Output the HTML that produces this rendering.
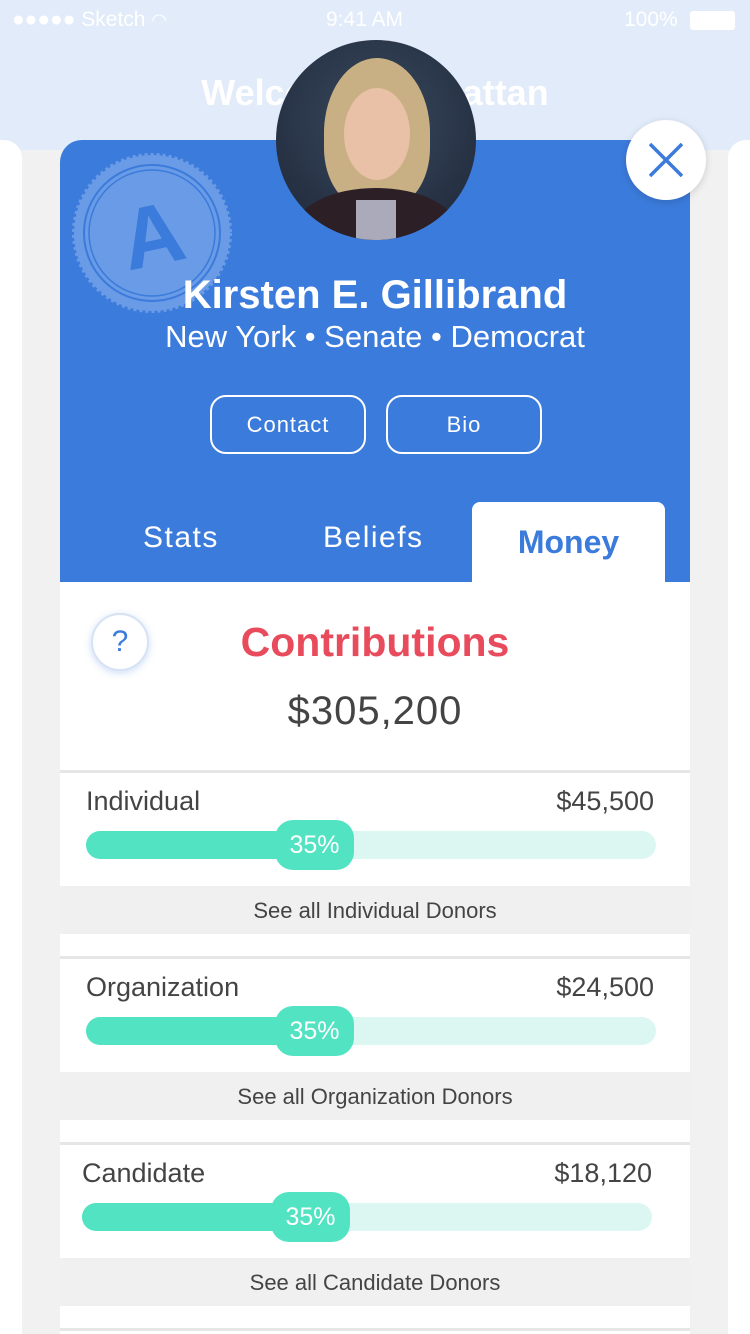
<!DOCTYPE html>
<html style="width:750px;height:1334px;overflow:hidden"><head><meta charset="utf-8"><style>
*{margin:0;padding:0;box-sizing:border-box}
body{width:750px;height:1334px;overflow:hidden;position:relative;background:#f1f1f1;font-family:"Liberation Sans",sans-serif}
.top{position:absolute;left:0;top:0;width:750px;height:150px;background:#e2ebf9}
.side{position:absolute;top:140px;width:22px;height:1194px;background:#fff}
.status{position:absolute;top:8px;color:#fff;font-size:21px}
.welcome{position:absolute;top:72px;width:750px;text-align:center;color:#fff;font-weight:bold;font-size:36px}
.card{position:absolute;left:60px;top:140px;width:630px;height:1194px;background:#fff;border-radius:22px 22px 0 0;overflow:hidden}
.blue{position:absolute;left:0;top:0;width:630px;height:442px;background:#3b7bdb}
.name{position:absolute;top:133px;width:630px;text-align:center;color:#fff;font-weight:bold;font-size:40px}
.sub{position:absolute;top:179px;width:630px;text-align:center;color:#fff;font-size:31px}
.btn{position:absolute;top:255px;width:156px;height:59px;border:2px solid #fff;border-radius:16px;color:#fff;font-size:22px;text-align:center;line-height:55px;letter-spacing:1px}
.tab{position:absolute;top:381px;color:#fff;font-size:30px;letter-spacing:1.5px}
.money{position:absolute;left:412px;top:362px;width:193px;height:82px;background:#fff;border-radius:8px 8px 0 0;color:#3b7bdb;font-weight:bold;font-size:32px;text-align:center;line-height:80px}
.q{position:absolute;left:31px;top:473px;width:58px;height:58px;border-radius:50%;border:2px solid #d7e2f5;box-shadow:0 2px 8px rgba(59,123,219,.25);color:#3b7bdb;font-size:30px;text-align:center;line-height:54px;background:#fff}
.contrib{position:absolute;top:479px;width:630px;text-align:center;color:#e84c5c;font-weight:bold;font-size:41px}
.total{position:absolute;top:549px;width:630px;text-align:center;color:#444;font-size:40px;letter-spacing:1px}
.sec{position:absolute;left:0;width:630px;height:186px;border-top:3px solid #e6e6e6}
.lab{position:absolute;left:26px;top:13px;color:#444;font-size:27px}
.amt{position:absolute;right:36px;top:13px;color:#444;font-size:27px}
.bar{position:absolute;left:26px;top:58px;width:570px;height:28px;border-radius:14px;background:#dcf7f1}
.fill{position:absolute;left:0;top:0;width:260px;height:28px;border-radius:14px;background:#52e3c2}
.pill{position:absolute;left:189px;top:-11px;width:79px;height:50px;border-radius:18px;background:#52e3c2;color:#fff;font-size:25px;text-align:center;line-height:50px}
.see{position:absolute;left:0;top:113px;width:630px;height:48px;background:#f0f0f0;color:#444;font-size:22px;text-align:center;line-height:50px}
</style></head><body>
<div class="top"></div>
<div class="side" style="left:0;border-radius:0 18px 0 0"></div>
<div class="side" style="left:728px;border-radius:18px 0 0 0"></div>
<div class="status" style="left:12px">●●●●● Sketch <span style="font-size:18px">◠</span></div>
<div class="status" style="left:326px">9:41 AM</div>
<div class="status" style="left:624px">100%</div>
<div style="position:absolute;left:690px;top:11px;width:45px;height:19px;border:2px solid #fff;border-radius:3px;background:#fff"></div>
<div class="welcome">Welcome Manhattan</div>
<div class="card">
 <div class="blue"></div>
 <svg style="position:absolute;left:12px;top:13px" width="160" height="160" viewBox="0 0 160 160">
  <circle cx="80" cy="80" r="78" fill="#6a9be6" stroke="#6a9be6" stroke-width="4" stroke-dasharray="3 3"/>
  <circle cx="80" cy="80" r="68" fill="none" stroke="#3b7bdb" stroke-width="2"/>
  <circle cx="80" cy="80" r="63" fill="none" stroke="#3b7bdb" stroke-width="1.5"/>
  <text x="80" y="112" text-anchor="middle" font-family="Liberation Sans" font-weight="bold" font-size="86" fill="#3b7bdb" transform="rotate(-12 80 80)">A</text>
 </svg>
 <div class="name">Kirsten E. Gillibrand</div>
 <div class="sub">New York • Senate • Democrat</div>
 <div class="btn" style="left:150px">Contact</div>
 <div class="btn" style="left:326px">Bio</div>
 <div class="tab" style="left:83px">Stats</div>
 <div class="tab" style="left:263px">Beliefs</div>
 <div class="money">Money</div>
 <div class="q">?</div>
 <div class="contrib">Contributions</div>
 <div class="total">$305,200</div>
 <div class="sec" style="top:630px"><div class="lab">Individual</div><div class="amt">$45,500</div><div class="bar"><div class="fill"></div><div class="pill">35%</div></div><div class="see">See all Individual Donors</div></div>
 <div class="sec" style="top:816px"><div class="lab">Organization</div><div class="amt">$24,500</div><div class="bar"><div class="fill"></div><div class="pill">35%</div></div><div class="see">See all Organization Donors</div></div>
 <div class="sec" style="top:1002px"><div class="lab" style="left:22px">Candidate</div><div class="amt" style="right:38px">$18,120</div><div class="bar" style="left:22px"><div class="fill"></div><div class="pill">35%</div></div><div class="see">See all Candidate Donors</div></div>
 <div class="sec" style="top:1188px;height:6px"></div>
</div>
<div style="position:absolute;left:276px;top:40px;width:200px;height:200px;border-radius:50%;overflow:hidden;background:radial-gradient(circle at 50% 40%,#3a4a60,#1c2535)">
 <div style="position:absolute;left:48px;top:18px;width:106px;height:150px;border-radius:50% 50% 40% 40%;background:#c9b084"></div>
 <div style="position:absolute;left:68px;top:48px;width:66px;height:92px;border-radius:50%;background:#e9c1a6"></div>
 <div style="position:absolute;left:20px;top:148px;width:160px;height:80px;border-radius:50% 50% 0 0;background:#2c1f26"></div>
 <div style="position:absolute;left:80px;top:160px;width:40px;height:50px;background:#aab"></div>
</div>
<div style="position:absolute;left:626px;top:120px;width:80px;height:80px;border-radius:50%;background:#fff;box-shadow:0 2px 8px rgba(0,0,0,.15)">
 <svg width="80" height="80" viewBox="0 0 80 80"><path d="M24 24L56 56M56 24L24 56" stroke="#3b7bdb" stroke-width="3.5" fill="none"/></svg>
</div>
</body></html>
